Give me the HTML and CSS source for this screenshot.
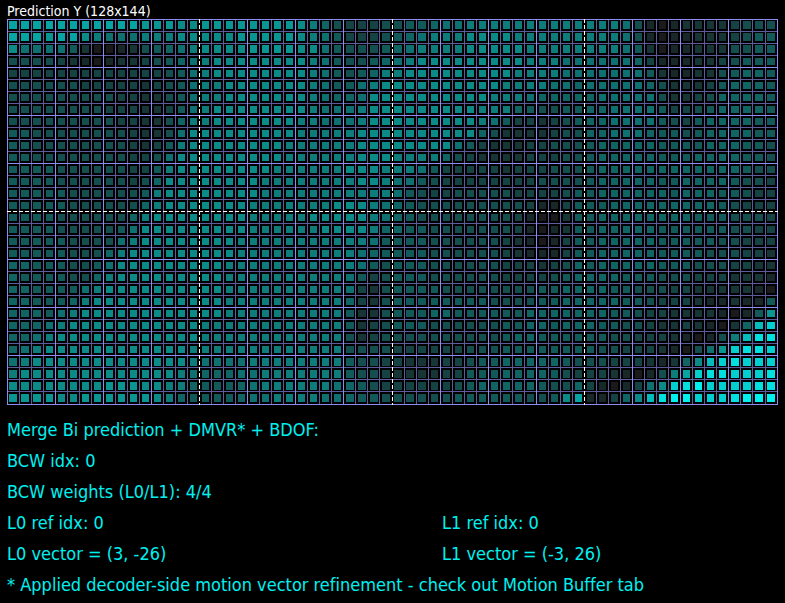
FILE: index.html
```html
<!DOCTYPE html>
<html lang="en">
<head>
    <meta charset="UTF-8">
    <meta name="viewport" content="width=device-width, initial-scale=1.0">
    <title>Prediction Y</title>
    <link rel="stylesheet" href="styles.css">
</head>
<body>
    <h1 class="title">Prediction Y (128x144)</h1>

    <svg id="samples" class="samples" viewBox="0 0 771 386" role="img" aria-label="Prediction samples"></svg>

    <div class="info">
        <p>Merge Bi prediction + DMVR* + BDOF:</p>
        <p>BCW idx: 0</p>
        <p>BCW weights (L0/L1): 4/4</p>
        <div class="lists">
            <p>L0 ref idx: 0</p>
            <p>L1 ref idx: 0</p>
            <p>L0 vector = (3, -26)</p>
            <p>L1 vector = (-3, 26)</p>
        </div>
        <p>* Applied decoder-side motion vector refinement - check out Motion Buffer tab</p>
    </div>

    <script src="samples.js"></script>
</body>
</html>
```
FILE: styles.css
```css
body {
    margin: 0;
    padding: 4px 7px 0;
    background-color: #000;
    font-family: "DejaVu Sans Condensed", Tahoma, "DejaVu Sans", sans-serif;
    font-variant-ligatures: none;
}
.title {
    margin: 0;
    color: #fff;
    font-size: 14px;
    font-weight: normal;
    line-height: 15px;
}
.samples {
    display: block;
    width: 100%;
    shape-rendering: crispEdges;
}
.line {
    fill: #5c5c9c;
}
.line-block {
    fill: #8c8cf0;
}
.dash {
    stroke: #fff;
    stroke-width: 1;
    stroke-dasharray: 4 2;
}
.dash-back {
    fill: #000;
}
.info {
    margin-top: 9px;
    color: #00f0f0;
    font-size: 18px;
    line-height: 31px;
}
.info p {
    margin: 0;
}
.lists {
    display: grid;
    grid-template-columns: 435fr 336fr;
}
```
FILE: samples.js
```js
// one hex digit per sample, grouped by 4x4 sub-block
const rows = [
    'bbbb bbbb bbba aa99 aaaa aaaa 9864 3334 4556 7788 8888 8888 8887 4101 2222 3444',
    'bbba bb98 7778 8899 999a aaaa 9875 3334 5678 8899 9988 8888 8887 4101 1222 3455',
    '9777 7520 0124 5678 9999 aaaa 9975 4445 6788 8899 9998 8888 8887 5201 1222 4455',
    '4444 3210 1223 4567 8999 9999 9875 4456 7899 9999 9998 8877 7777 6311 1223 4555',
    '3333 3333 3333 3457 8999 9999 9875 4568 8999 9999 9988 8877 7777 7521 1224 5665',
    '4444 4433 3332 3457 8899 9999 9875 5789 9999 9999 9888 8776 7777 7642 2235 6665',
    '4444 4444 4332 2457 8899 9999 9876 6799 9999 9999 8887 6666 6777 7742 2346 6665',
    '4444 4444 3332 2357 8999 9999 9877 7899 9999 9998 8865 4455 6677 7753 3456 6665',
    '4444 4444 4332 2468 8999 9999 8877 7899 9999 9998 7533 2345 6677 7754 3566 6655',
    '5544 4444 4432 2479 9999 9999 8888 8999 9999 9996 4222 2344 6677 7655 4566 6655',
    '5544 4444 4432 3589 9999 9998 8888 8999 9999 9753 2223 3444 5666 6655 5566 6554',
    '5544 4444 4433 4799 9999 9998 8888 8999 8888 6432 2223 3344 5666 6655 5666 6554',
    '5555 4444 4433 5899 9999 9988 8888 9998 8875 3333 3233 3444 5666 6666 6666 6544',
    '5555 4444 4434 6999 9999 9888 8888 8998 7754 3333 3333 4444 5666 6655 6666 5443',
    '5555 5444 4445 8999 9999 9888 8888 8888 7543 3444 4433 3345 5666 6665 6665 5433',
    '5555 5444 4446 8999 9999 8888 8889 9987 6544 4444 4443 1135 5566 6666 6665 4333',
    '5555 4444 4468 9999 9999 8888 8999 9987 6544 4444 4431 0025 5666 6666 6555 4443',
    '5555 4444 4579 9999 9999 8888 8899 9986 6554 4444 4431 0125 5666 6655 5555 4433',
    '5555 5444 4789 9999 9998 8888 8888 8875 5554 4444 4321 0135 5666 6655 5554 4333',
    '5555 5444 6899 9999 9998 8888 8888 8765 5554 4444 4321 1135 5666 6655 5544 4332',
    '6655 5445 7999 9999 9988 8888 8888 8754 5554 4444 4333 2346 5666 6655 5444 3322',
    '6555 5446 8999 9999 9988 8888 8888 7534 5554 4444 4333 3456 6665 5544 4333 2221',
    '6655 5578 9999 9999 9988 8888 8888 7324 5555 4444 4444 5566 6655 4443 3222 2210',
    '6655 5689 9999 9999 9988 8888 8888 6324 5555 5555 4444 5566 6665 5433 3211 2115',
    '6665 7899 9999 9999 9988 8888 8888 5224 5556 6555 5556 6666 6655 4332 2221 015a',
    '6667 8999 9999 9999 8888 8888 8888 5234 5554 4444 4556 6566 6554 4322 3210 26cd',
    '6678 9999 9999 9999 8888 8888 8888 4234 4444 4444 4566 5555 5544 3332 1014 8cee',
    '6789 9999 9999 9998 8888 8888 8888 4444 3333 3344 4555 5555 5443 3321 047a deed',
    '7899 9999 9999 9998 7777 8888 8888 5443 3222 3345 5666 6654 4433 3212 69cd eddd',
    '8999 9999 9999 9987 6667 7888 8888 5443 2222 3355 5666 6543 3321 0148 bdee ddde',
    '9999 9999 aaa9 9886 5556 7888 8887 6543 3333 3456 6666 5446 3101 379d efdd ddee',
    'aaaa 99aa aaaa 9865 5556 7788 8877 6554 4444 4555 5554 459b 1136 9cef fddd efff'
].map(row => row.replace(/ /g, ''));

const palette = [
    '#1a1a1a', '#182828', '#173535', '#154242', '#144e4e', '#125a5a', '#106464', '#0e7070',
    '#0d7c7a', '#0b8a88', '#0a9492', '#08a4a4', '#05bcbc', '#02d0d0', '#01e0e0', '#00f0f0'
];

const width = 771;
const height = 386;
const cell = 12.032;
const svg = document.getElementById('samples');

function add(name, attrs) {
    const el = document.createElementNS('http://www.w3.org/2000/svg', name);
    for (const key in attrs) {
        el.setAttribute(key, attrs[key]);
    }
    svg.appendChild(el);
}

function edge(i) {
    return Math.floor(i * cell);
}

// sample squares keep whole pixels, so some are 8 wide and the rest 7
function span(i) {
    const start = Math.floor(2.907 + i * 12.03125);
    const end = Math.floor(10.125 + i * 12.03125);
    return [start, end - start];
}

function drawLines(step, className) {
    for (let i = 0; i <= 32; i += step) {
        add('rect', { class: className, x: 0, y: edge(i), width: width, height: 1 });
    }
    for (let i = 0; i <= 64; i += step) {
        add('rect', { class: className, x: edge(i), y: 0, width: 1, height: height });
    }
}

drawLines(1, 'line');
drawLines(4, 'line-block');

// 16x16 sub-block borders
add('rect', { class: 'dash-back', x: 0, y: edge(16), width: width, height: 1 });
add('line', { class: 'dash', x1: 0, y1: edge(16) + 0.5, x2: width, y2: edge(16) + 0.5 });
for (const i of [16, 32, 48]) {
    add('rect', { class: 'dash-back', x: edge(i), y: 0, width: 1, height: height });
    add('line', { class: 'dash', x1: edge(i) + 0.5, y1: 0, x2: edge(i) + 0.5, y2: height });
}

rows.forEach((row, r) => {
    const [y, h] = span(r);
    [...row].forEach((level, c) => {
        const [x, w] = span(c);
        add('rect', { x: x, y: y, width: w, height: h, fill: palette[parseInt(level, 16)] });
    });
});
```
